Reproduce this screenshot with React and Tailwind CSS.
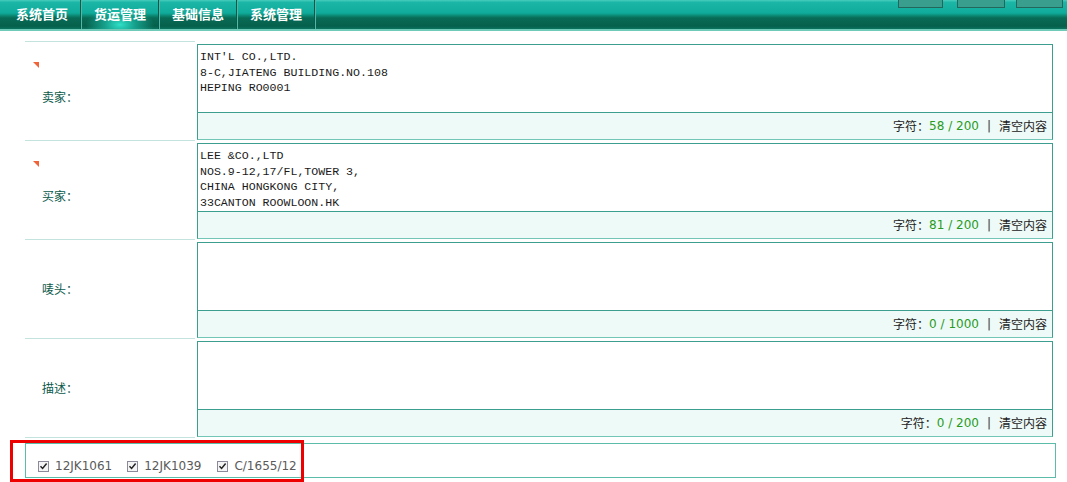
import React from "react";

const cjk = { fontFamily: '"Noto Sans CJK SC", "Noto Sans", sans-serif' };
const mono = { fontFamily: '"Liberation Mono", "Noto Sans CJK SC", monospace' };
const verd = { fontFamily: '"DejaVu Sans", "Noto Sans CJK SC", sans-serif' };

const navItems = ["系统首页", "货运管理", "基础信息", "系统管理"];

const rows = [
  { label: "卖家：", req: true, text: ["INT'L CO.,LTD.", "8-C,JIATENG BUILDING.NO.108", "HEPING RO0001"], count: "58 / 200" },
  { label: "买家：", req: true, text: ["LEE &CO.,LTD", "NOS.9-12,17/FL,TOWER 3,", "CHINA HONGKONG CITY,", "33CANTON ROOWLOON.HK"], count: "81 / 200" },
  { label: "唛头：", req: false, text: [], count: "0 / 1000" },
  { label: "描述：", req: false, text: [], count: "0 / 200" },
];

function Check() {
  return (
    <span className="inline-flex w-[11px] h-[11px] border border-[#8a8a9a] bg-[#f4f4f4] items-center justify-center mr-[6px]">
      <svg width="9" height="9" viewBox="0 0 9 9">
        <path d="M1.5 4.2 L3.6 6.4 L7.6 1.6" stroke="#222" strokeWidth="1.5" fill="none" />
      </svg>
    </span>
  );
}

export default function App() {
  return (
    <div className="relative w-[1067px] h-[482px] bg-white overflow-hidden">
      {/* Nav */}
      <div
        className="relative h-[31px] border-b-2 border-[#6fcab8] flex items-center pl-[4px]"
        style={{
          background:
            "linear-gradient(to bottom, #48cdbd 0%, #1cb6a6 8%, #10ab9b 45%, #0c8f7b 52%, #086b56 62%, #06604b 90%, #0a7460 100%)",
        }}
      >
        {navItems.map((t, i) => (
          <React.Fragment key={t}>
            <div
              className={
                "relative h-full w-[76px] flex items-center justify-center text-white font-bold text-[13px] " +
                (i === 1 ? "bg-[radial-gradient(ellipse_45%_60%_at_50%_85%,#2fe0c8_0%,rgba(31,200,180,0.6)_45%,rgba(0,0,0,0)_100%)]" : "")
              }
              style={cjk}
            >
              <span className="relative -top-[1px]">{t}</span>
            </div>
            <div className="h-full w-[2px] flex">
              <div className="w-[1px] h-full bg-[#0a5a4c]" />
              <div className="w-[1px] h-full bg-[#4fb9a8]" />
            </div>
          </React.Fragment>
        ))}
        <div className="absolute top-0 left-[898px] w-[45px] h-[8px] bg-[#3a9e8f] border border-t-0 border-[#22665c]" />
        <div className="absolute top-0 left-[957px] w-[48px] h-[8px] bg-[#3a9e8f] border border-t-0 border-[#22665c]" />
        <div className="absolute top-0 left-[1016px] w-[47px] h-[8px] bg-[#3a9e8f] border border-t-0 border-[#22665c]" />
      </div>

      {/* Content */}
      <div className="ml-[25px] mt-[10px] w-[1032px]">
        {rows.map((r, i) => (
          <div key={i} className="flex h-[99px]">
            <div className="relative w-[170px] border-t border-[#c3e4de] flex items-center pl-[17px]">
              {r.req && (
                <svg className="absolute left-[8px] top-[20px]" width="6" height="6" viewBox="0 0 6 6">
                  <polygon points="0,0 6,0 6,6" fill="#f0643a" />
                </svg>
              )}
              <span className={"text-[12px] text-[#0c5a4b] " + (r.req ? "mt-[12px]" : "")} style={cjk}>
                {r.label}
              </span>
            </div>
            <div className="pl-[2px] pt-[3px]">
              <div className="w-[856px] h-[96px] border border-[#3c9e8e] border-b-[#72c6b6] flex flex-col">
                <div className="h-[67px] px-[2px] pt-[4px] text-[11.6px] leading-[15.5px] text-[#1a1a1a] whitespace-pre" style={mono}>
                  {r.text.join("\n")}
                </div>
                <div className="flex-1 border-t border-[#3c9e8e] bg-[#eefaf7] flex items-center justify-end pr-[5px] text-[12px] text-[#222]">
                  <span style={cjk}>字符：</span>
                  <span className="text-[#2a9a1e]" style={verd}>{r.count}</span>
                  <span className="mx-[8px] text-[#333]" style={verd}>|</span>
                  <span style={cjk}>清空内容</span>
                </div>
              </div>
            </div>
          </div>
        ))}
        <div className="w-[170px] border-t border-[#c3e4de]" />
        <div className="mt-[5px] w-[1031px] h-[35px] border border-[#5cbcaa] flex items-end pb-[2px] pl-[12px] text-[12px] text-[#5a5a5a]" style={verd}>
          <span className="flex items-center mr-[15px]"><Check />12JK1061</span>
          <span className="flex items-center mr-[16px]"><Check />12JK1039</span>
          <span className="flex items-center"><Check />C/1655/12</span>
        </div>
      </div>

      {/* Red annotation box */}
      <div className="absolute left-[10px] top-[440px] w-[294px] h-[42px] border-[3px] border-[#ee0000]" />
    </div>
  );
}
